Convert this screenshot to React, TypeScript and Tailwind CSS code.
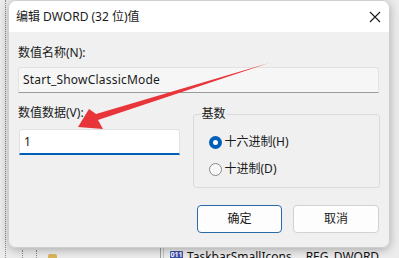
import React from 'react';

const font = "font-['Noto_Sans','Noto_Sans_CJK_SC',sans-serif]";

const Radio = ({ checked, label }: { checked?: boolean; label: string }) => (
  <div className="flex items-center h-[16px]">
    {checked ? (
      <span className="w-[13px] h-[13px] rounded-full bg-[#005fb8] flex items-center justify-center">
        <span className="w-[5px] h-[5px] rounded-full bg-white" />
      </span>
    ) : (
      <span className="w-[13px] h-[13px] rounded-full border border-[#8a8a8a] bg-[#f7f7f7]" />
    )}
    <span className="ml-[3px] text-[12px] leading-[16px] text-[#1a1a1a]">{label}</span>
  </div>
);

const App: React.FC = () => {
  return (
    <div className={`relative w-[399px] h-[258px] overflow-hidden bg-[#ececec] ${font}`}>
      {/* background window (registry editor) */}
      <div className="flex h-full">
        <div className="w-[160px] h-full flex">
          <div className="ml-[5px] h-full border-l border-dotted border-[#8a8a8a]" />
          <div className="flex-1 flex flex-col justify-end">
            <div className="h-[8px] flex">
              <div className="ml-[16px] border-l border-dotted border-[#8a8a8a]" />
              <div className="ml-[13px] border-l border-dotted border-[#8a8a8a]" />
              <div className="ml-[11px] mt-[4px] w-[9px] h-[4px] rounded-t-[2px] bg-[#d9b55a]" />
            </div>
          </div>
        </div>
        <div className="w-[1px] h-full bg-[#9c9c9c]" />
        <div className="ml-[2px] w-[1px] h-full bg-[#c4c4c4]" />
        <div className="flex-1 flex flex-col justify-end">
          <div className="h-[9px] flex items-start overflow-hidden">
            <div className="ml-[6px] mt-[2px] w-[13px] h-[10px] rounded-[1px] bg-[#3c4fa8] text-[7px] leading-[8px] font-bold text-white text-center">
              011
            </div>
            <span className="ml-[4px] text-[12px] leading-[16px] text-[#111] whitespace-nowrap">TaskbarSmallIcons</span>
            <span className="ml-[14px] text-[12px] leading-[16px] text-[#111] whitespace-nowrap">REG_DWORD</span>
          </div>
        </div>
      </div>

      {/* dialog */}
      <div className="absolute left-[8px] top-0 w-[382px] h-[248px] rounded-[8px] overflow-hidden border border-[#cfcfcf] shadow-[0_2px_10px_rgba(0,0,0,0.28)] flex flex-col">
        <div className="h-[31px] bg-white flex items-center justify-between pl-[7px] pr-[8px]">
          <span className="text-[12px] leading-[16px] text-[#1a1a1a]">编辑 DWORD (32 位)值</span>
          <svg width="12" height="12" viewBox="0 0 12 12">
            <path d="M1 1L11 11M11 1L1 11" stroke="#1a1a1a" strokeWidth="1.1" fill="none" />
          </svg>
        </div>
        <div className="flex-1 bg-[#f0f0f0] pl-[9px] pr-[9px] pt-[13px]">
          <div className="text-[12px] leading-[16px] text-[#1a1a1a]">数值名称(N):</div>
          <div className="mt-[6px] mr-[1px] h-[26px] flex items-center pl-[4px] bg-[#f6f6f6] border border-[#e2e2e2] border-b-[#9c9c9c] rounded-t-[3px] text-[12px] tracking-[0.2px] text-[#1a1a1a]">
            Start_ShowClassicMode
          </div>
          <div className="mt-[12px] flex">
            <div className="w-[162px]">
              <div className="text-[12px] leading-[16px] text-[#1a1a1a]">数值数据(V):</div>
              <div className="mt-[8px] ml-[1px] h-[26px] flex items-center pl-[4px] bg-white border border-[#e2e2e2] border-b-2 border-b-[#005fb8] rounded-t-[3px] text-[12px] text-[#1a1a1a]">
                1
              </div>
            </div>
            <fieldset className="ml-[13px] mt-[1px] w-[188px] h-[82px] border border-[#dadada] rounded-[3px] pl-[15px] m-0">
              <legend className="ml-[-8px] px-[1px] text-[12px] leading-[16px] text-[#1a1a1a]">基数</legend>
              <div className="mt-[12px] flex flex-col gap-[11px]">
                <Radio checked label="十六进制(H)" />
                <Radio label="十进制(D)" />
              </div>
            </fieldset>
          </div>
          <div className="mt-[17px] flex justify-end gap-[11px] pr-[1px]">
            <button className="w-[85px] h-[28px] rounded-[4px] bg-[#fdfdfd] border border-[#2a6aa8] text-[12px] text-[#1a1a1a]">
              确定
            </button>
            <button className="w-[86px] h-[28px] rounded-[4px] bg-[#fdfdfd] border border-[#d2d2d2] text-[12px] text-[#1a1a1a]">
              取消
            </button>
          </div>
        </div>
      </div>

      {/* red annotation arrow */}
      <svg className="absolute left-0 top-0 pointer-events-none" width="399" height="258">
        <polygon points="78,127 89,109 96,114 269,63 98,120 103,129" fill="#e8353a" />
      </svg>
    </div>
  );
};

export default App;
